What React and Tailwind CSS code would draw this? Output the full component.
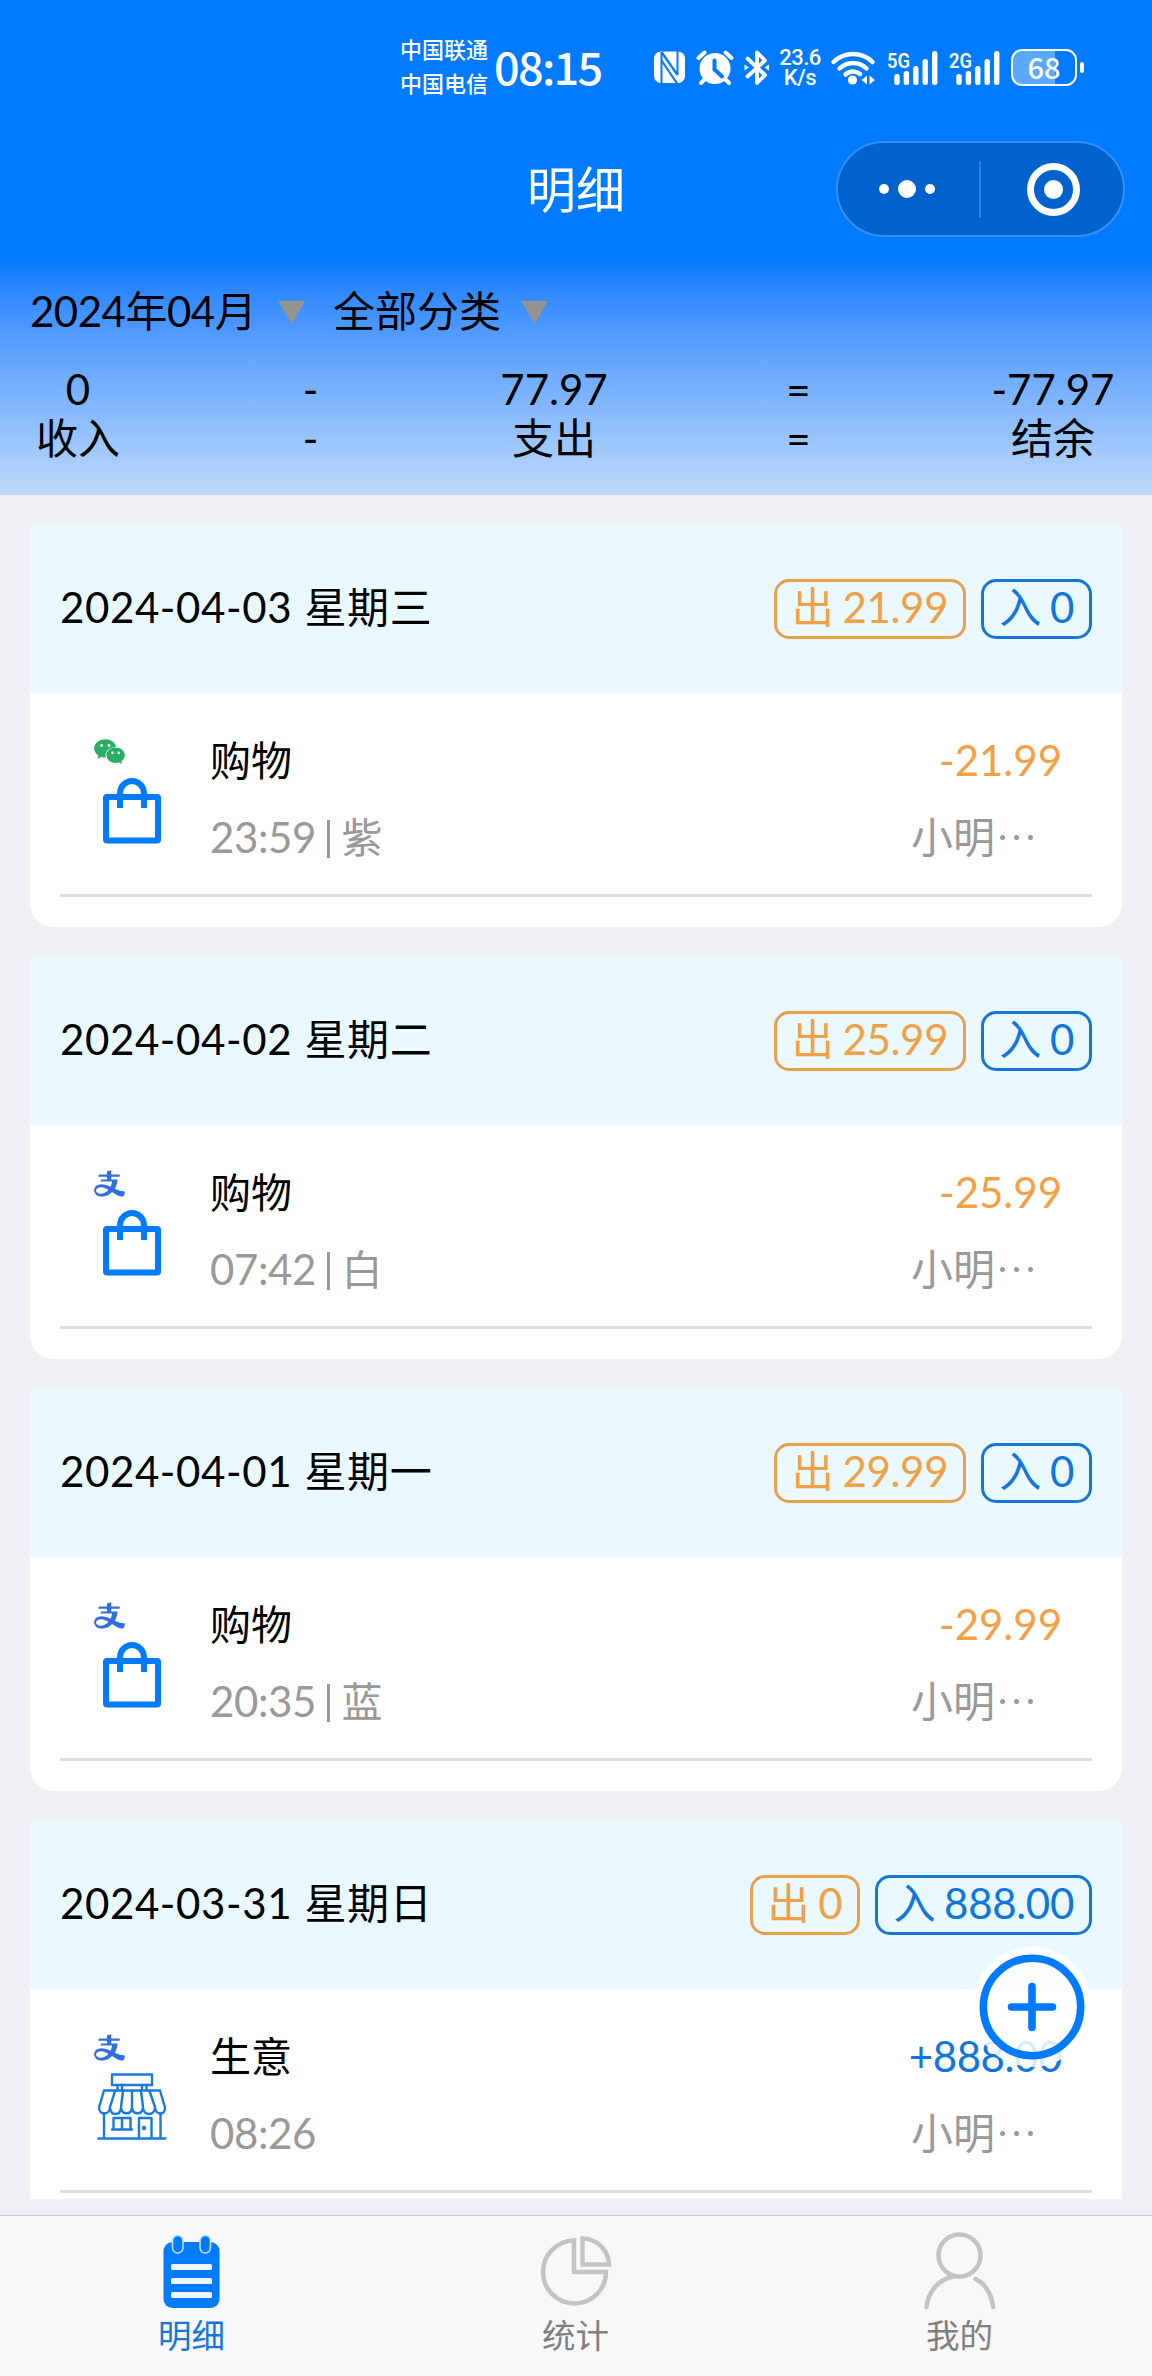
import { useState } from 'react'
import { AiFillWechat, AiOutlineAlipay } from 'react-icons/ai'

const DIAS = [
  {
    data: '2024-04-03 星期三',
    out: '21.99',
    in: '0',
    items: [{ pay: 'wechat', icon: 'bag', name: '购物', time: '23:59', note: '紫', amount: '-21.99', book: '小明' }],
  },
  {
    data: '2024-04-02 星期二',
    out: '25.99',
    in: '0',
    items: [{ pay: 'alipay', icon: 'bag', name: '购物', time: '07:42', note: '白', amount: '-25.99', book: '小明' }],
  },
  {
    data: '2024-04-01 星期一',
    out: '29.99',
    in: '0',
    items: [{ pay: 'alipay', icon: 'bag', name: '购物', time: '20:35', note: '蓝', amount: '-29.99', book: '小明' }],
  },
  {
    data: '2024-03-31 星期日',
    out: '0',
    in: '888.00',
    items: [{ pay: 'alipay', icon: 'shop', name: '生意', time: '08:26', note: '', amount: '+888.00', book: '小明' }],
  },
]

const RESUMO = [
  { value: '0', label: '收入', width: 'w-[84px]' },
  { value: '-', label: '-', width: 'w-[20px]' },
  { value: '77.97', label: '支出', width: 'w-[106px]' },
  { value: '=', label: '=', width: 'w-[22px]' },
  { value: '-77.97', label: '结余', width: 'w-[126px]' },
]

function App() {
  const [tab, setTab] = useState('list')

  return (
    <div className="relative w-[1152px] h-[2376px] flex flex-col overflow-hidden bg-[#efeff4] text-black text-[42px] font-[Lato,'Noto_Sans_CJK_SC',sans-serif]">
      <header className="bg-[#007aff] h-[261px] shrink-0">
        <StatusBar />
        <NavBar />
      </header>

      <Summary />

      <main className="flex flex-col gap-[30px] px-[30px] pt-[30px] h-[1704px] shrink-0 overflow-hidden">
        {DIAS.map(dia => <DayCard key={dia.data} dia={dia} />)}
      </main>

      <TabBar tab={tab} setTab={setTab} />

      <button className="absolute left-[972px] top-[1947px] size-[120px] rounded-full bg-white/85">
        <svg viewBox="0 0 120 120" className="size-full" fill="none" stroke="#007aff" strokeWidth="7.6" strokeLinecap="round">
          <circle cx="60" cy="60" r="48.7" />
          <path d="M60 39.5v41M39.5 60h41" />
        </svg>
      </button>
    </div>
  )
}

function StatusBar() {
  return (
    <div className="flex items-center h-[135px] pl-[400px] text-white">
      <div className="w-[94px] pb-[2px] text-[22px] leading-[34px] font-medium whitespace-nowrap">
        <div>中国联通</div>
        <div>中国电信</div>
      </div>
      <div className="w-[160px] pb-[4px] text-[45px] leading-[50px] font-medium tracking-[-1.7px] font-['Noto_Sans_CJK_SC',sans-serif]">08:15</div>
      <StatusIcons />
      <div className="w-[46px] ml-[7px] mr-[8px] text-center text-[22px] leading-[20px] font-['Roboto',sans-serif] font-medium tracking-[-0.5px]">
        <div>23.6</div>
        <div>K/s</div>
      </div>
      <WifiIcon />
      <Signal label="5G" />
      <Signal label="2G" />
      <div className="flex items-center ml-[11px]">
        <div className="flex items-center justify-center w-[66px] h-[37px] rounded-[11px] border-[2.5px] border-white bg-linear-to-r from-[#5ba8ff] from-68% to-[#007aff] to-68% pb-[2px] text-[29px] leading-none font-medium font-['Noto_Sans_CJK_SC',sans-serif]">68</div>
        <div className="w-[4px] h-[11px] ml-[3px] rounded-full bg-white"></div>
      </div>
    </div>
  )
}

// NFC, despertador e bluetooth
function StatusIcons() {
  return (
    <svg width="116" height="36" viewBox="654 50 116 36" className="shrink-0" fill="none">
      <rect x="654" y="51.5" width="31" height="31.5" rx="7" fill="#fff" />
      <path d="M661.5 52L677.5 75M661.5 60.500L677.500 84" stroke="#007aff" strokeWidth="2.2" />
      <path d="M661.5 52V83M677.5 51V75" stroke="#007aff" strokeWidth="2" />
      <circle cx="715" cy="68.500" r="15.500" fill="#fff" />
      <path d="M698.500 58l6-5.500M731.500 58l-6-5.500M705 79l-4 4M725 79l4 4" stroke="#fff" strokeWidth="4" strokeLinecap="round" />
      <path d="M714.500 60.500v9l7.500 7" stroke="#007aff" strokeWidth="4" strokeLinecap="round" />
      <path d="M747.500 58.500L765 75l-8 8V52.500l8 8L747.500 76.500" stroke="#fff" strokeWidth="3.800" strokeLinejoin="round" strokeLinecap="round" />
      <path d="M744.500 64.500l4.500 3-4.500 3zM769 64.500l-4.500 3 4.500 3z" fill="#fff" />
    </svg>
  )
}

function WifiIcon() {
  return (
    <svg width="46" height="38" viewBox="830 49 46 38" className="shrink-0 -ml-px" fill="none" stroke="#fff" strokeWidth="4.500" strokeLinecap="round">
      <path d="M833.500 62a28 28 0 0 1 39 0M839.500 68.500a19.500 19.500 0 0 1 27 0M845.500 74.500a11 11 0 0 1 14.500-.5" />
      <circle cx="852.500" cy="80" r="4.600" fill="#fff" stroke="none" />
      <path d="M867 75.500v9l-5.500-4.500zM869.500 75.500v9l5.500-4.500z" fill="#fff" stroke="none" />
    </svg>
  )
}

function Signal({ label }) {
  return (
    <svg width="51" height="36" viewBox="0 0 51 36" className="shrink-0 ml-[11px]" fill="#fff">
      <text x="0" y="17.500" fontSize="21" fontWeight="600" fontFamily="Roboto, sans-serif" textLength="23" lengthAdjust="spacingAndGlyphs">{label}</text>
      <rect x="7.300" y="24" width="5.400" height="11" rx="2.500" />
      <rect x="16.700" y="21" width="5.400" height="14" rx="2.500" />
      <rect x="26.100" y="16" width="5.400" height="19" rx="2.500" />
      <rect x="35.500" y="9" width="5.400" height="26" rx="2.500" />
      <rect x="45" y="1" width="5.400" height="34" rx="2.500" />
    </svg>
  )
}

function NavBar() {
  return (
    <div className="grid grid-cols-3 items-center h-[108px] text-white">
      <div></div>
      <h1 className="text-center text-[49px] leading-[60px]">明细</h1>
      <div className="flex items-center justify-self-end w-[289px] h-[96px] mr-[27px] rounded-full border-2 border-[#3390f5] bg-[#0062cc]">
        <div className="flex flex-1 items-center justify-center gap-[9px] pr-[2px]">
          <span className="size-[10px] rounded-full bg-white"></span>
          <span className="size-[18px] rounded-full bg-white"></span>
          <span className="size-[10px] rounded-full bg-white"></span>
        </div>
        <div className="w-[2px] h-[57px] bg-[#3381d6]"></div>
        <div className="flex flex-1 items-center justify-center pl-[4px]">
          <div className="flex items-center justify-center size-[53px] rounded-full border-[7px] border-white">
            <span className="size-[19px] rounded-full bg-white"></span>
          </div>
        </div>
      </div>
    </div>
  )
}

function Triangle() {
  return (
    <svg width="27" height="23" viewBox="0 0 27 23" fill="#94938f">
      <path d="M0 0h27L13.500 23z" />
    </svg>
  )
}

function Summary() {
  return (
    <section className="h-[234px] shrink-0 bg-linear-to-b from-[#007aff] to-[#bdd8f8] border-b-2 border-[#c8d6ea]">
      <div className="flex items-center h-[104px] pl-[30px] pb-[2px] leading-[50px]">
        <span className="w-[248px] pb-[3px] tracking-[-0.5px]">2024年04月</span>
        <Triangle />
        <span className="w-[188px] ml-[28px] pb-[3px]">全部分类</span>
        <Triangle />
      </div>
      <div className="flex justify-between px-9 leading-[49px] text-center whitespace-nowrap">
        {RESUMO.map(col => (
          <div key={col.label} className={`${col.width} flex flex-col items-center`}>
            <span>{col.value}</span>
            <span>{col.label}</span>
          </div>
        ))}
      </div>
    </section>
  )
}

function Badge({ label, value, color }) {
  return (
    <span className={`flex h-[60px] items-center rounded-[15px] border-[3px] px-[15px] gap-[9px] leading-[50px] pb-1 whitespace-nowrap tracking-[-0.3px] ${color}`}>
      <span>{label}</span>
      <span>{value}</span>
    </span>
  )
}

function DayCard({ dia }) {
  return (
    <section className="shrink-0 rounded-t-[6px] rounded-b-[24px] overflow-hidden bg-white pb-[30px]">
      <div className="flex items-center justify-between h-[168px] px-[30px] bg-[#eaf8ff]">
        <span className="pb-[3px] whitespace-nowrap tracking-[0.6px] [word-spacing:1px]">{dia.data}</span>
        <div className="flex gap-[15px]">
          <Badge label="出" value={dia.out} color="border-[#e6a050] text-[#f0a045]" />
          <Badge label="入" value={dia.in} color="border-[#1478d2] text-[#0f76dc]" />
        </div>
      </div>
      {dia.items.map(item => <Item key={item.time} item={item} />)}
    </section>
  )
}

function Item({ item }) {
  return (
    <div className="flex h-[204px] mx-[30px] pt-[29px] border-b-3 border-[#dcdcdc]">
      <div className="w-[150px] pl-[32px] pt-[12px]">
        {item.pay === 'wechat'
          ? <AiFillWechat className="size-[35px] text-[#2aae67]" />
          : <AiOutlineAlipay className="size-[35px] text-[#2f6fe0]" />}
        {item.icon === 'bag' ? <BagIcon /> : <ShopIcon />}
      </div>
      <div className="flex-1 leading-[77px] whitespace-nowrap">
        <div className="text-[41px]">{item.name}</div>
        <div className="flex gap-[11px] text-[#999]">
          <span className="tracking-[-0.4px]">{item.time}</span>
          {item.note && <span className="self-center w-[3.500px] h-[38px] mt-0.5 bg-[#999]"></span>}
          {item.note && <span className="text-[41px]">{item.note}</span>}
        </div>
      </div>
      <div className="w-[180px] mr-[30px] leading-[77px] whitespace-nowrap">
        <div className={`text-right ${item.amount[0] === '-' ? 'text-[#f0a045]' : 'text-[#0f76dc] tracking-[-0.4px]'}`}>{item.amount}</div>
        <div className="flex pl-[29px] text-[#999]">
          <span>{item.book}</span>
          <span className="flex items-center gap-[9px] ml-[5px]">
            <i className="size-[5px] rounded-full bg-[#999]"></i>
            <i className="size-[5px] rounded-full bg-[#999]"></i>
            <i className="size-[5px] rounded-full bg-[#999]"></i>
          </span>
        </div>
      </div>
    </div>
  )
}

function BagIcon() {
  return (
    <svg width="80" height="76" viewBox="92 769 80 76" fill="none" stroke="#007aff" strokeWidth="6">
      <rect x="106" y="797" width="52" height="43.500" rx="1" />
      <path d="M120 808V793.500a12 12.500 0 0 1 24 0V808" />
    </svg>
  )
}

function ShopIcon() {
  return (
    <svg width="80" height="76" viewBox="92 2065 80 76" fill="none" stroke="#1a7ad9" strokeWidth="2.400" strokeLinejoin="round" strokeLinecap="round">
      <rect x="112" y="2074.500" width="40" height="10.500" />
      <path d="M117.500 2085v5M122 2085v5M142 2085v5M146.500 2085v5" />
      <path d="M104 2090.500h56l5 17c.5 8-9 8-10 .5c-1 8-11 8-12 0c-1 7-10 7-11 0c-1 7-10 7-11 0c-1 8-10 8-11 0c-1 7.500-11 7.500-11-.5z" />
      <path d="M115 2091l-5 16M123 2091l-2 16M132 2091v16M141 2091l2 16M149.500 2091l5.500 16" />
      <path d="M104 2113v25M160.500 2113v25M98.500 2138.500h67" />
      <path d="M112 2129.500h20M113.500 2129.500V2118h17v11.500M122 2118v11.500M139 2138V2118h12.500v20" />
      <circle cx="144" cy="2128" r="1" />
    </svg>
  )
}

function TabBar({ tab, setTab }) {
  const tabs = [
    { key: 'list', label: '明细', icon: <ListIcon /> },
    { key: 'stats', label: '统计', icon: <PieIcon /> },
    { key: 'me', label: '我的', icon: <UserIcon /> },
  ]

  return (
    <nav className="grid grid-cols-3 mt-[16px] h-[161px] shrink-0 border-t border-[#c4c6ca] bg-[#f8f8f8]">
      {tabs.map(t => (
        <button
          key={t.key}
          onClick={() => setTab(t.key)}
          className={`flex flex-col items-center pt-[14px] pr-[1px] text-[33.500px] leading-[40px] ${tab === t.key ? 'text-[#1677d6]' : 'text-[#808080]'}`}
        >
          {t.icon}
          <span className="mt-[4px]">{t.label}</span>
        </button>
      ))}
    </nav>
  )
}

function ListIcon() {
  return (
    <svg width="81" height="81" viewBox="0 0 81 81" className="shrink-0">
      <rect x="12.500" y="12" width="56" height="66" rx="9" fill="#007aff" />
      <g fill="#007aff" stroke="#c4deff" strokeWidth="1.600">
        <rect x="21.500" y="5.500" width="10.500" height="17.500" rx="5.200" />
        <rect x="49" y="5.500" width="10.500" height="17.500" rx="5.200" />
      </g>
      <g fill="#f0f6fd">
        <rect x="20" y="34" width="41" height="6" rx="1.500" />
        <rect x="20" y="48" width="41" height="6" rx="1.500" />
        <rect x="20" y="62" width="41" height="6" rx="1.500" />
      </g>
    </svg>
  )
}

function PieIcon() {
  return (
    <svg width="81" height="81" viewBox="0 0 81 81" className="shrink-0" fill="none" stroke="#c4c4c4" strokeWidth="4.500">
      <path d="M39 10.500A31.500 31.500 0 1 0 71 42H39z" />
      <path d="M47.500 8.500V34.500H74A27 27 0 0 0 47.500 8.500z" />
    </svg>
  )
}

function UserIcon() {
  return (
    <svg width="81" height="81" viewBox="0 0 81 81" className="shrink-0" fill="none" stroke="#c4c4c4" strokeWidth="4.500" strokeLinecap="round">
      <circle cx="40.500" cy="25.500" r="21" />
      <path d="M34 46.500C18 50 9 63 7.500 77M56.500 49C67 54 72.500 65 74 77" />
    </svg>
  )
}

export default App
